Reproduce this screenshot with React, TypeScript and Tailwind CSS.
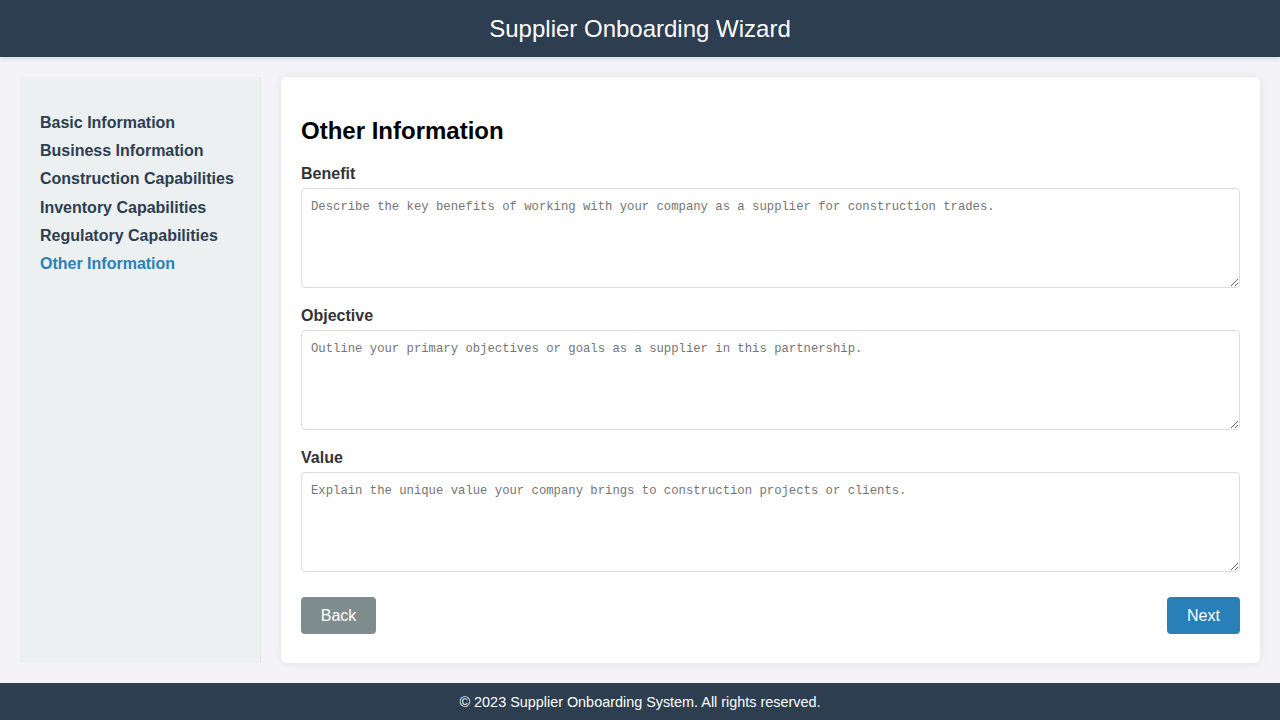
const steps = [
  "Basic Information",
  "Business Information",
  "Construction Capabilities",
  "Inventory Capabilities",
  "Regulatory Capabilities",
  "Other Information",
];

const fields = [
  {
    label: "Benefit",
    placeholder: "Describe the key benefits of working with your company as a supplier for construction trades.",
  },
  {
    label: "Objective",
    placeholder: "Outline your primary objectives or goals as a supplier in this partnership.",
  },
  {
    label: "Value",
    placeholder: "Explain the unique value your company brings to construction projects or clients.",
  },
];

const App = () => {
  const active = "Other Information";

  return (
    <div className="min-h-screen flex flex-col bg-[#f4f4f8] font-['Liberation_Sans',Arial,sans-serif]">
      {/* Header */}
      <header className="h-[57px] bg-[#2c3e50] text-white flex items-center justify-center shadow-[0_2px_4px_rgba(0,0,0,0.1)]">
        <h1 className="text-[24px] leading-[28px]">Supplier Onboarding Wizard</h1>
      </header>

      <div className="flex-1 flex gap-5 p-5">
        {/* Sidebar */}
        <nav className="w-[241px] shrink-0 bg-[#ecf0f1] border-r border-[#e3e6e8] px-5 pt-[37px]">
          <ul>
            {steps.map((step) => (
              <li
                key={step}
                className={
                  "text-[16px] font-bold leading-[18.2px] mb-[10px] " +
                  (step === active ? "text-[#2980b9]" : "text-[#2c3e50]")
                }
              >
                {step}
              </li>
            ))}
          </ul>
        </nav>

        {/* Main card */}
        <main className="flex-1 bg-white rounded-[6px] shadow-[0_0_8px_rgba(0,0,0,0.08)] px-5 pt-[40px] pb-5 flex flex-col">
          <h2 className="text-[24px] font-bold leading-[28px] text-black mb-[20px]">Other Information</h2>

          {fields.map((f) => (
            <div key={f.label} className="mb-[19px]">
              <label className="block text-[16px] font-bold leading-[18px] text-[#333] mb-[5px]">{f.label}</label>
              <textarea
                placeholder={f.placeholder}
                className="block w-full h-[100px] border border-[#ddd] rounded-[4px] pt-[11px] pb-[9px] pl-[9px] pr-[10px] font-['Liberation_Mono',monospace] text-[12.25px] leading-[15px] placeholder:text-[#757575] resize-y outline-none"
              />
            </div>
          ))}

          <div className="flex justify-between mt-[6px]">
            <button className="h-[37px] w-[75px] flex items-center justify-center rounded-[4px] bg-[#7f8c8d] text-white text-[16px]">Back</button>
            <button className="h-[37px] w-[73px] flex items-center justify-center rounded-[4px] bg-[#2980b9] text-white text-[16px]">Next</button>
          </div>
        </main>
      </div>

      {/* Footer */}
      <footer className="h-[37px] bg-[#2c3e50] text-white flex items-center justify-center text-[14.4px] pt-[2px]">
        © 2023 Supplier Onboarding System. All rights reserved.
      </footer>
    </div>
  );
};

export default App;
